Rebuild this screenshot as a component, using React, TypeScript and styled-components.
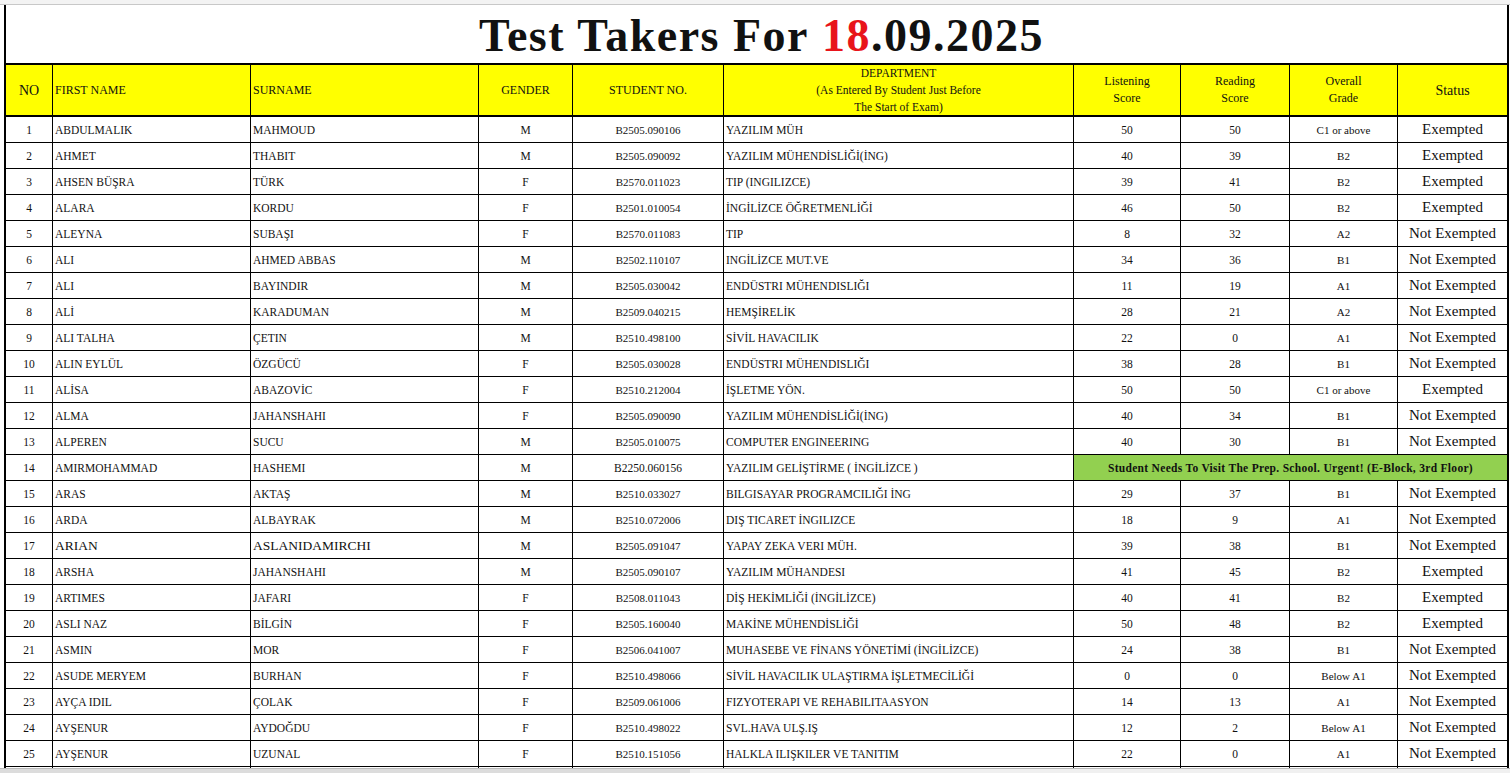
import React from "react";
import styled, { createGlobalStyle } from "styled-components";

const Global = createGlobalStyle`
  html, body { margin: 0; padding: 0; background: #fff; overflow: hidden; }
  body { width: 1510px; height: 773px; }
`;

const cols = "47px 198px 228px 94px 151px 350px 107px 109px 108px 109px";

const Page = styled.div`
  height: 773px;
  overflow: hidden;
  display: flex;
  flex-direction: column;
  font-family: "Liberation Serif", "DejaVu Serif", serif;
  color: #111;
`;
const TopStrip = styled.div`
  height: 4px;
  flex: none;
  border-bottom: 1px solid #c8c8c8;
  background: #f3f3f3;
`;
const Sheet = styled.div`
  margin-left: 4px;
  width: 1501px;
  border-left: 2px solid #000;
  border-right: 2px solid #000;
  flex: 1;
  min-height: 0;
  overflow: hidden;
`;
const Title = styled.div`
  height: 60px;
  display: flex;
  align-items: center;
  justify-content: center;
  font-size: 46px;
  font-weight: bold;
  letter-spacing: 1.5px;
  border-bottom: 2px solid #000;
  padding: 2px 0 0 10px;
  box-sizing: border-box;
`;
const Red = styled.span`color: #e8141b;`;
const Grid = styled.div`
  display: grid;
  grid-template-columns: ${cols};
  grid-auto-rows: 26px;
`;
const HeadCell = styled.div<{ $align?: string; $last?: boolean }>`
  height: 50px;
  background: #ffff00;
  border-right: ${(p) => (p.$last ? "none" : "1px solid #000")};
  border-bottom: 2px solid #000;
  display: flex;
  align-items: center;
  justify-content: ${(p) => p.$align || "center"};
  text-align: center;
  font-size: 12px;
  line-height: 17px;
  padding-left: ${(p) => (p.$align ? "2px" : "0")};
`;
const HeadRow = styled.div`
  display: grid;
  grid-template-columns: ${cols};
`;
const Cell = styled.div<{ $align?: string; $size?: number; $last?: boolean }>`
  border-right: ${(p) => (p.$last ? "none" : "1px solid #000")};
  border-bottom: 1px solid #000;
  display: flex;
  align-items: center;
  justify-content: ${(p) => p.$align || "center"};
  font-size: ${(p) => p.$size || 11.5}px;
  padding-left: ${(p) => (p.$align ? "2px" : "0")};
  white-space: nowrap;
  overflow: hidden;
`;
const Banner = styled.div`
  grid-column: span 4;
  background: #92d050;
  border-bottom: 1px solid #000;
  display: flex;
  align-items: center;
  justify-content: center;
  font-weight: bold;
  font-size: 11.5px;
  letter-spacing: 0.3px;
`;
const ScrollBar = styled.div`
  height: 4px;
  flex: none;
  background: linear-gradient(to right, #dcdcdc 0, #dcdcdc 690px, #f0f0f0 690px);
  border-top: 1px solid #bbb;
`;

type R = [string, string, string, string, string, string, string, string, string, string];
const rows: R[] = [
  ["1","ABDULMALIK","MAHMOUD","M","B2505.090106","YAZILIM MÜH","50","50","C1 or above","Exempted"],
  ["2","AHMET","THABIT","M","B2505.090092","YAZILIM MÜHENDİSLİĞİ(İNG)","40","39","B2","Exempted"],
  ["3","AHSEN BÜŞRA","TÜRK","F","B2570.011023","TIP (INGILIZCE)","39","41","B2","Exempted"],
  ["4","ALARA","KORDU","F","B2501.010054","İNGİLİZCE ÖĞRETMENLİĞİ","46","50","B2","Exempted"],
  ["5","ALEYNA","SUBAŞI","F","B2570.011083","TIP","8","32","A2","Not Exempted"],
  ["6","ALI","AHMED ABBAS","M","B2502.110107","INGİLİZCE MUT.VE","34","36","B1","Not Exempted"],
  ["7","ALI","BAYINDIR","M","B2505.030042","ENDÜSTRI MÜHENDISLIĞI","11","19","A1","Not Exempted"],
  ["8","ALİ","KARADUMAN","M","B2509.040215","HEMŞİRELİK","28","21","A2","Not Exempted"],
  ["9","ALI TALHA","ÇETIN","M","B2510.498100","SİVİL HAVACILIK","22","0","A1","Not Exempted"],
  ["10","ALIN EYLÜL","ÖZGÜCÜ","F","B2505.030028","ENDÜSTRI MÜHENDISLIĞI","38","28","B1","Not Exempted"],
  ["11","ALİSA","ABAZOVİC","F","B2510.212004","İŞLETME YÖN.","50","50","C1 or above","Exempted"],
  ["12","ALMA","JAHANSHAHI","F","B2505.090090","YAZILIM MÜHENDİSLİĞİ(İNG)","40","34","B1","Not Exempted"],
  ["13","ALPEREN","SUCU","M","B2505.010075","COMPUTER ENGINEERING","40","30","B1","Not Exempted"],
  ["14","AMIRMOHAMMAD","HASHEMI","M","B2250.060156","YAZILIM GELİŞTİRME ( İNGİLİZCE )","","","",""],
  ["15","ARAS","AKTAŞ","M","B2510.033027","BILGISAYAR PROGRAMCILIĞI İNG","29","37","B1","Not Exempted"],
  ["16","ARDA","ALBAYRAK","M","B2510.072006","DIŞ TICARET İNGILIZCE","18","9","A1","Not Exempted"],
  ["17","ARIAN","ASLANIDAMIRCHI","M","B2505.091047","YAPAY ZEKA VERI MÜH.","39","38","B1","Not Exempted"],
  ["18","ARSHA","JAHANSHAHI","M","B2505.090107","YAZILIM MÜHANDESI","41","45","B2","Exempted"],
  ["19","ARTIMES","JAFARI","F","B2508.011043","DİŞ HEKİMLİĞİ (İNGİLİZCE)","40","41","B2","Exempted"],
  ["20","ASLI NAZ","BİLGİN","F","B2505.160040","MAKİNE MÜHENDİSLİĞİ","50","48","B2","Exempted"],
  ["21","ASMIN","MOR","F","B2506.041007","MUHASEBE VE FİNANS YÖNETİMİ (İNGİLİZCE)","24","38","B1","Not Exempted"],
  ["22","ASUDE MERYEM","BURHAN","F","B2510.498066","SİVİL HAVACILIK ULAŞTIRMA İŞLETMECİLİĞİ","0","0","Below A1","Not Exempted"],
  ["23","AYÇA IDIL","ÇOLAK","F","B2509.061006","FIZYOTERAPI VE REHABILITAASYON","14","13","A1","Not Exempted"],
  ["24","AYŞENUR","AYDOĞDU","F","B2510.498022","SVL.HAVA ULŞ.IŞ","12","2","Below A1","Not Exempted"],
  ["25","AYŞENUR","UZUNAL","F","B2510.151056","HALKLA ILIŞKILER VE TANITIM","22","0","A1","Not Exempted"],
  ["","","","","","","","","",""],
];

export default function App() {
  return (
    <Page>
      <Global />
      <TopStrip />
      <Sheet>
        <Title>
          Test Takers For&nbsp;<Red>18</Red>.09.2025
        </Title>
        <HeadRow>
          <HeadCell style={{ fontSize: 14 }}>NO</HeadCell>
          <HeadCell $align="flex-start">FIRST NAME</HeadCell>
          <HeadCell $align="flex-start">SURNAME</HeadCell>
          <HeadCell>GENDER</HeadCell>
          <HeadCell>STUDENT NO.</HeadCell>
          <HeadCell style={{ fontSize: 11.5 }}>
            DEPARTMENT<br />(As Entered By Student Just Before<br />The Start of Exam)
          </HeadCell>
          <HeadCell>Listening<br />Score</HeadCell>
          <HeadCell>Reading<br />Score</HeadCell>
          <HeadCell>Overall<br />Grade</HeadCell>
          <HeadCell $last style={{ fontSize: 14 }}>Status</HeadCell>
        </HeadRow>
        <Grid>
          {rows.map((r, i) =>
            r[0] === "14" ? (
              <React.Fragment key={i}>
                <Cell>{r[0]}</Cell>
                <Cell $align="flex-start">{r[1]}</Cell>
                <Cell $align="flex-start">{r[2]}</Cell>
                <Cell>{r[3]}</Cell>
                <Cell>{r[4]}</Cell>
                <Cell $align="flex-start">{r[5]}</Cell>
                <Banner>Student Needs To Visit The Prep. School. Urgent! (E-Block, 3rd Floor)</Banner>
              </React.Fragment>
            ) : (
              <React.Fragment key={i}>
                <Cell>{r[0]}</Cell>
                <Cell $align="flex-start" $size={r[0] === "17" ? 13.5 : 11.5}>{r[1]}</Cell>
                <Cell $align="flex-start" $size={r[0] === "17" ? 13.5 : 11.5}>{r[2]}</Cell>
                <Cell>{r[3]}</Cell>
                <Cell $size={11}>{r[4]}</Cell>
                <Cell $align="flex-start">{r[5]}</Cell>
                <Cell>{r[6]}</Cell>
                <Cell>{r[7]}</Cell>
                <Cell $size={11}>{r[8]}</Cell>
                <Cell $last $size={15}>{r[9]}</Cell>
              </React.Fragment>
            )
          )}
        </Grid>
      </Sheet>
      <ScrollBar />
    </Page>
  );
}
